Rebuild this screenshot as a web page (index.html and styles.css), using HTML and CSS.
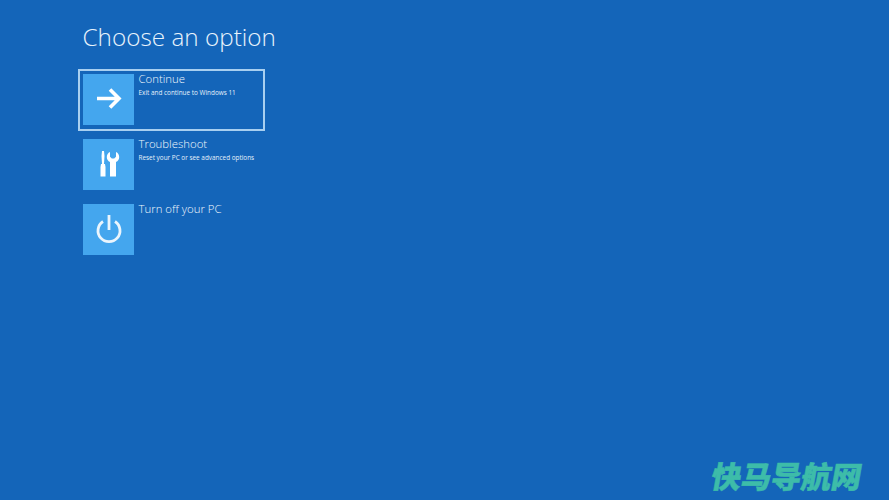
FILE: index.html
```html
<!DOCTYPE html>
<html lang="en">
<head>
<meta charset="utf-8">
<title>Choose an option</title>
<link rel="stylesheet" href="styles.css">
</head>
<body>
<main class="screen">
  <h1 class="title">Choose an option</h1>
  <ul class="options">
    <li class="option option-focus">
      <span class="tile">
        <svg class="icon" viewBox="0 0 51 51"><path d="M14 24.500H36M27 15.500L36 24.500L27 33.500" fill="none" stroke="#fff" stroke-width="3.600"/></svg>
      </span>
      <div class="label">
        <div class="name">Continue</div>
        <div class="desc">Exit and continue to Windows 11</div>
      </div>
    </li>
    <li class="option">
      <span class="tile">
        <svg class="icon" viewBox="0 0 51 51"><path fill="#fff" d="M19 12h2l.5 5-.5 8h1l.5 3v9.500h-5V28l.5-3h1l-.5-8zM27 13v4.800l1.800 1.700h2.400l1.800-1.700V13c2 .9 3.200 2.900 3.200 5 0 2.300-1.200 4.200-3.200 5.100V37.500h-6V23.100c-2-.9-3.200-2.800-3.200-5.100 0-2.100 1.200-4.100 3.200-5z"/></svg>
      </span>
      <div class="label">
        <div class="name">Troubleshoot</div>
        <div class="desc">Reset your PC or see advanced options</div>
      </div>
    </li>
    <li class="option">
      <span class="tile">
        <svg class="icon" viewBox="0 0 51 51"><path d="M26 11V26M20 17.500a11 11 0 1 0 12 0" fill="none" stroke="#eaf5fd" stroke-width="2.800"/></svg>
      </span>
      <div class="label">
        <div class="name">Turn off your PC</div>
      </div>
    </li>
  </ul>
</main>
<div class="watermark">快马导航网</div>
</body>
</html>
```
FILE: styles.css
```css
html, body {
  margin: 0;
  height: 100%;
}

body {
  position: relative;
  background: #1465b9;
  color: #fff;
  font-family: "Open Sans", "Liberation Sans", sans-serif;
  overflow: hidden;
}

.screen {
  padding: 19px 0 0 78px;
}

.title {
  margin: 0 0 14px 4.500px;
  height: 36px;
  font-size: 24.300px;
  line-height: 36px;
  font-weight: 300;
  color: #e8f3fc;
}

.options {
  list-style: none;
  margin: 0;
  padding: 0;
  display: flex;
  flex-direction: column;
  gap: 4px;
}

.option {
  box-sizing: border-box;
  width: 187px;
  height: 61px;
  padding: 3px;
  border: 2px solid transparent;
  display: flex;
}

.option-focus {
  height: 62px;
  margin-bottom: -1px;
  border-color: #a8cff0;
}

.tile {
  flex: none;
  width: 51px;
  height: 51px;
  background: #44a6ee;
}

.icon {
  display: block;
  width: 51px;
  height: 51px;
}

.label {
  padding: 0 0 0 4.500px;
  min-width: 0;
  white-space: nowrap;
}

.name {
  font-size: 11.400px;
  line-height: 16px;
  font-weight: 300;
  color: #f0f7fd;
  margin-top: -3px;
}

.desc {
  font-size: 6.400px;
  line-height: 10px;
  margin-top: 1px;
  color: #e4f1fb;
}

.watermark {
  position: absolute;
  right: 27px;
  bottom: 7px;
  font-family: "Noto Sans CJK SC", sans-serif;
  font-size: 30px;
  line-height: 36px;
  font-weight: 900;
  color: #3dbca9;
  -webkit-text-stroke: 0.500px #3dbca9;
  transform: skewX(-10deg);
  white-space: nowrap;
}
```
